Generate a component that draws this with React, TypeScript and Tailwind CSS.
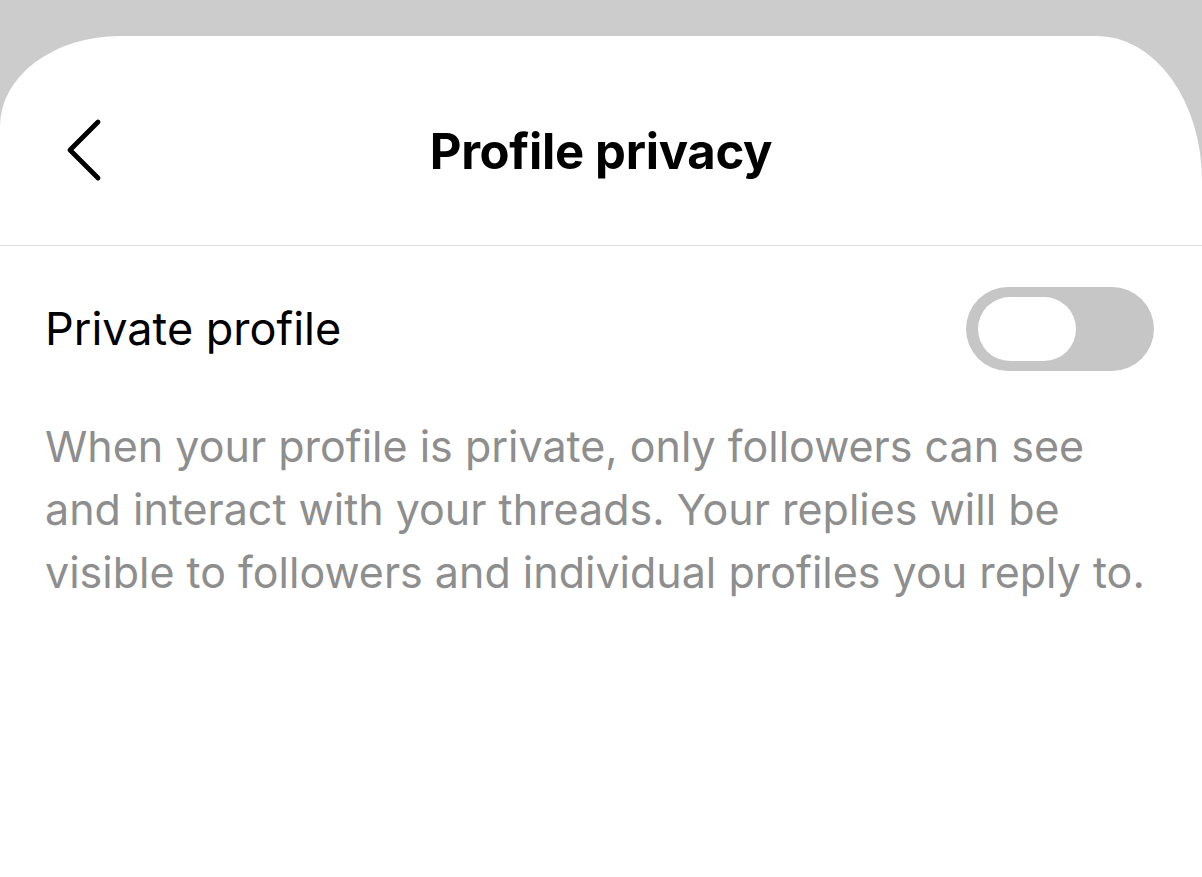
import { useState } from 'react';

export default function App() {
  const [isPrivate, setIsPrivate] = useState(false);

  return (
    <div className="min-h-[877px] w-full bg-[#cccccc] pt-[36px] font-['Inter','Noto_Sans',sans-serif]">
      <div className="min-h-[841px] bg-white rounded-tl-[120px_90px] rounded-tr-[105px_145px]">
        {/* header */}
        <div className="relative flex h-[210px] items-center justify-center border-b border-[#dedede] pt-[22px]">
          <button className="absolute left-[62px] top-[78px] flex h-[72px] w-[44px] items-center justify-center">
            <svg width="40" height="66" viewBox="0 0 40 66" fill="none">
              <path d="M34 5 L6 33 L34 61" stroke="#000" strokeWidth="4.8" strokeLinecap="round" strokeLinejoin="round" />
            </svg>
          </button>
          <h1 className="text-[49px] font-bold tracking-[-0.3px] text-black">Profile privacy</h1>
        </div>

        {/* row */}
        <div className="flex items-center justify-between pl-[45px] pr-[48px] pt-[41px]">
          <span className="text-[45px] text-black">Private profile</span>
          <button
            onClick={() => setIsPrivate(!isPrivate)}
            className={`flex h-[84px] w-[188px] items-center rounded-full px-[12px] ${isPrivate ? 'justify-end bg-black' : 'justify-start bg-[#c6c6c6]'}`}
          >
            <span className="block h-[64px] w-[98px] rounded-full bg-white" />
          </button>
        </div>

        <p className="pl-[45px] pr-[30px] pt-[44px] text-[43px] leading-[63px] text-[#8e8e8e]">
          When your profile is private, only followers can see and interact with your threads. Your replies will be visible to followers and individual profiles you reply to.
        </p>
      </div>
    </div>
  );
}
